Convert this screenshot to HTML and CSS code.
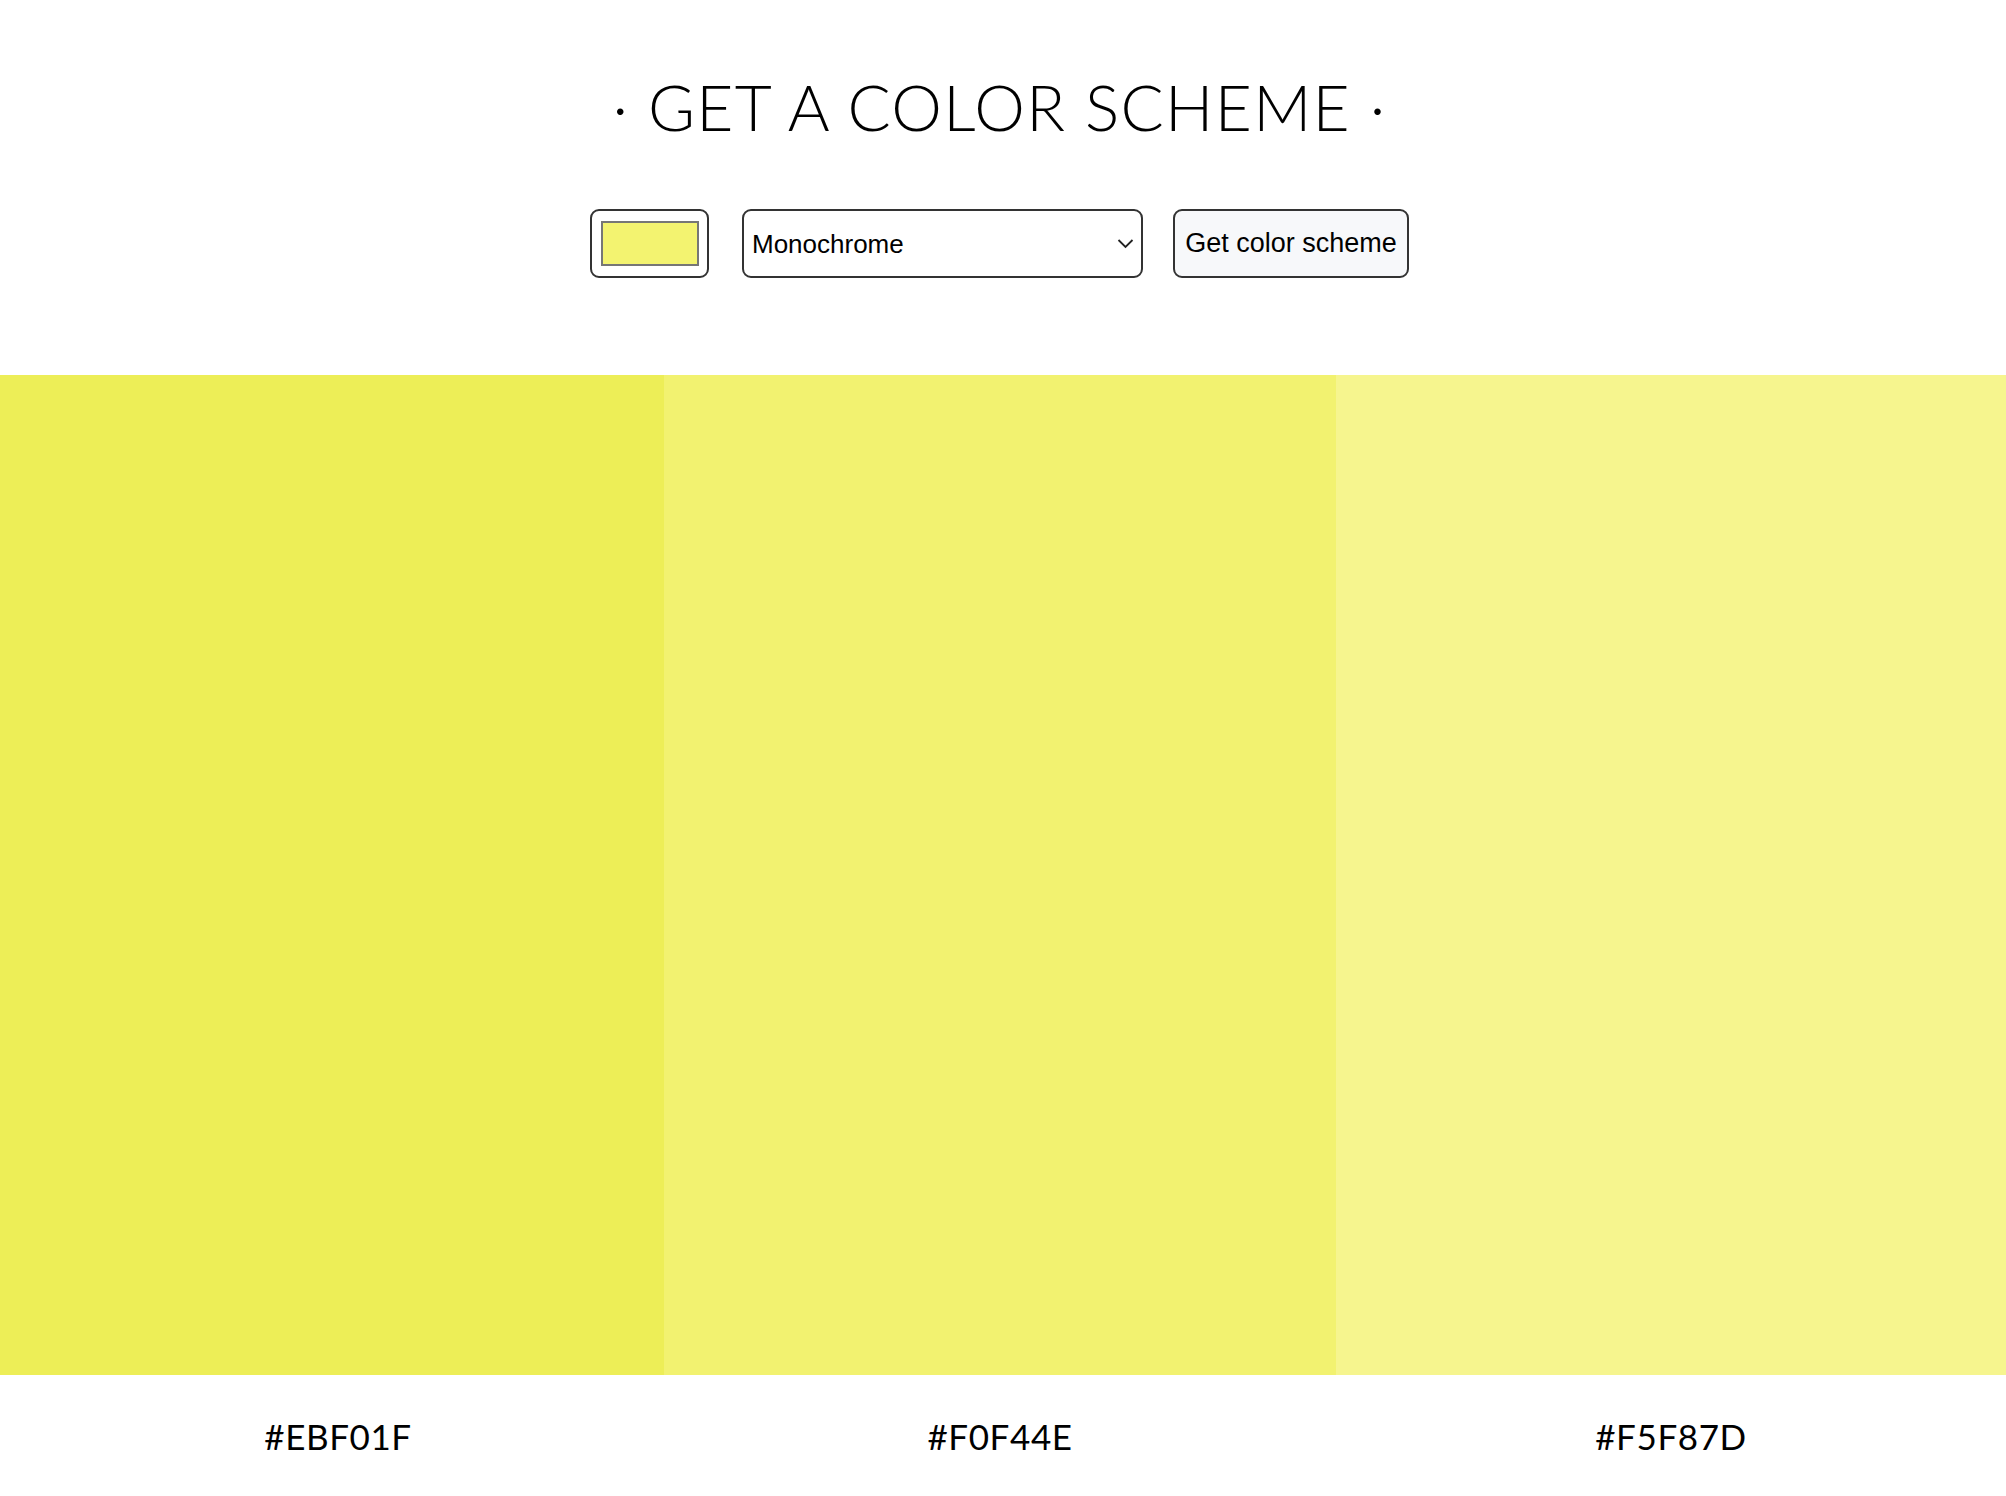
FILE: index.html
```html
<!DOCTYPE html>
<html lang="en">
<head>
<meta charset="utf-8">
<title>Color Scheme</title>
<link rel="stylesheet" href="styles.css">
</head>
<body>
<header class="header">
  <h1 class="title">· GET A COLOR SCHEME ·</h1>
  <form class="controls">
    <div class="color-well"><div class="color-swatch"></div></div>
    <div class="select-wrap">
      <select class="mode-select">
        <option>Monochrome</option>
      </select>
      <svg class="chevron" width="17" height="11" viewBox="0 0 17 11"><path d="M1.5 2 L8.5 9 L15.5 2" fill="none" stroke="#222" stroke-width="1.8"/></svg>
    </div>
    <button type="button" class="get-btn">Get color scheme</button>
  </form>
</header>
<main class="scheme">
  <div class="swatch c1"></div>
  <div class="swatch c2"></div>
  <div class="swatch c3"></div>
  <div class="label label-first">#EBF01F</div>
  <div class="label">#F0F44E</div>
  <div class="label">#F5F87D</div>
</main>
</body>
</html>
```

FILE: styles.css
```css
html, body {
  margin: 0;
  padding: 0;
  background: #fff;
}
body {
  font-family: "Liberation Sans", Arial, sans-serif;
  color: #000;
}
.header {
  display: flex;
  flex-direction: column;
  align-items: center;
}
.title {
  margin: 75px 7px 0 0;
  font-family: Lato, "Open Sans", sans-serif;
  font-weight: 300;
  font-size: 64px;
  line-height: 64px;
  letter-spacing: 1.3px;
  color: #000;
  white-space: nowrap;
}
.controls {
  margin: 70px 7px 0 0;
  display: flex;
  align-items: center;
  height: 69px;
}
.color-well {
  box-sizing: border-box;
  width: 119px;
  height: 69px;
  border: 2px solid #333;
  border-radius: 9px;
  background: #fff;
  display: flex;
  align-items: center;
  justify-content: center;
}
.color-swatch {
  box-sizing: border-box;
  width: 98px;
  height: 45px;
  border: 2px solid #767676;
  background: #f3f370;
}
.select-wrap {
  position: relative;
  margin-left: 33px;
  width: 401px;
  height: 69px;
}
.mode-select {
  appearance: none;
  -webkit-appearance: none;
  box-sizing: border-box;
  width: 100%;
  height: 100%;
  border: 2px solid #333;
  border-radius: 9px;
  background: #fff;
  padding: 0 0 0 8px;
  font-family: "Liberation Sans", Arial, sans-serif;
  font-size: 26px;
  color: #000;
  margin: 0;
}
.chevron {
  position: absolute;
  right: 9px;
  top: 29px;
  pointer-events: none;
}
.get-btn {
  box-sizing: border-box;
  margin-left: 30px;
  width: 236px;
  height: 69px;
  border: 2px solid #333;
  border-radius: 9px;
  background: #f7f8fa;
  font-family: "Liberation Sans", Arial, sans-serif;
  font-size: 27px;
  color: #000;
  padding: 0;
}
.scheme {
  margin-top: 97px;
  display: grid;
  grid-template-columns: 664px 672px 1fr;
}
.swatch {
  height: 1000px;
}
.c1 { background: #edee57; }
.c2 { background: #f2f270; }
.c3 { background: #f6f58e; }
.label {
  margin-top: 40px;
  text-align: center;
  font-family: Lato, "Open Sans", sans-serif;
  font-size: 35px;
  line-height: 42px;
  letter-spacing: 0.6px;
  color: #000;
}
.label-first {
  padding-left: 12px;
}
```
